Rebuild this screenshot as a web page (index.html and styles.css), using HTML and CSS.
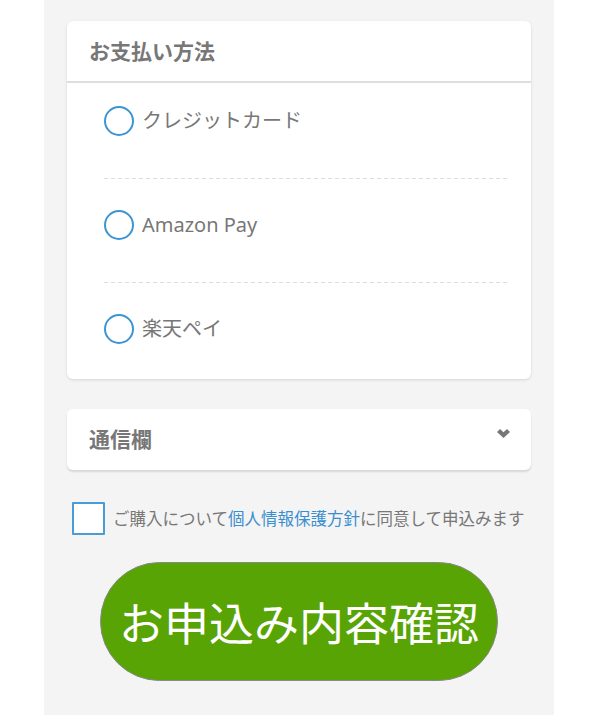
FILE: index.html
```html
<!DOCTYPE html>
<html lang="ja">
<head>
<meta charset="utf-8">
<link rel="stylesheet" href="styles.css">
</head>
<body>
<div class="page">
  <section class="card">
    <h2 class="card-head">お支払い方法</h2>
    <ul class="pay-list">
      <li class="pay-item"><span class="radio"></span><span class="pay-label">クレジットカード</span></li>
      <li class="pay-item"><span class="radio"></span><span class="pay-label">Amazon Pay</span></li>
      <li class="pay-item"><span class="radio"></span><span class="pay-label">楽天ペイ</span></li>
    </ul>
  </section>

  <section class="card card-collapse">
    <h2 class="collapse-title">通信欄</h2>
    <svg class="chev" width="13" height="9" viewBox="0 0 13 9"><path d="M0 3 L3 0 L6.5 3.2 L10 0 L13 3 L6.5 9 Z" fill="#777777"/></svg>
  </section>

  <div class="agree">
    <span class="checkbox"></span>
    <span class="agree-text">ご購入について<a class="link" href="#">個人情報保護方針</a>に同意して申込みます</span>
  </div>

  <div class="btn-wrap">
    <button class="confirm-btn" type="button">お申込み内容確認</button>
  </div>
</div>
</body>
</html>
```

FILE: styles.css
```css
html, body {
  margin: 0;
  padding: 0;
  background: #ffffff;
}

body {
  font-family: "Noto Sans", "Noto Sans CJK JP", sans-serif;
  color: #777777;
}

.page {
  width: 510px;
  min-height: 715px;
  margin-left: 44px;
  background: #f4f4f4;
  padding: 21px 23px 0;
  box-sizing: border-box;
}

.card {
  background: #ffffff;
  border-radius: 6px;
  box-shadow: 0 1px 3px rgba(0, 0, 0, 0.13);
}

.card-head {
  margin: 0;
  height: 58px;
  padding: 0 22px 2px;
  display: flex;
  align-items: center;
  font-size: 21px;
  font-weight: bold;
  color: #777777;
  border-bottom: 2px solid #dedede;
  box-sizing: content-box;
}

.pay-list {
  list-style: none;
  margin: 0;
  padding: 0 22px 0 37px;
}

.pay-item {
  display: flex;
  align-items: center;
  padding: 31px 0 43px;
  background-image: linear-gradient(to right, #dcdcdc 0, #dcdcdc 4px, transparent 4px, transparent 7px);
  background-size: 7px 1px;
  background-repeat: repeat-x;
  background-position: left bottom;
}

.pay-item:first-child {
  padding-top: 23px;
}

.pay-item:last-child {
  padding-bottom: 35px;
  background-image: none;
}

.radio {
  width: 26px;
  height: 26px;
  border: 2px solid #3b95d2;
  border-radius: 50%;
  flex: none;
  background: #fff;
}

.pay-label {
  margin-left: 8px;
  font-size: 20px;
  line-height: 30px;
  color: #777777;
}

.card-collapse {
  margin-top: 30px;
  height: 61px;
  padding: 0 22px 0 22px;
  display: flex;
  align-items: center;
  justify-content: space-between;
  box-shadow: 0 2px 2px rgba(0, 0, 0, 0.12);
}

.collapse-title {
  margin: 0 0 3px;
  font-size: 21px;
  font-weight: bold;
  color: #777777;
}

.chev {
  margin-top: -12px;
  margin-right: -1px;
}

.agree {
  display: flex;
  align-items: center;
  margin-top: 32px;
  padding-left: 5px;
}

.checkbox {
  width: 29px;
  height: 29px;
  border: 2px solid #4a9bd6;
  background: #ffffff;
  flex: none;
  border-radius: 1px;
}

.agree-text {
  margin-left: 8px;
  font-size: 16.5px;
  line-height: 24px;
  color: #777777;
  white-space: nowrap;
}

.link {
  color: #3b8fd0;
  text-decoration: none;
}

.btn-wrap {
  display: flex;
  justify-content: center;
  margin-top: 27px;
}

.confirm-btn {
  width: 398px;
  height: 119px;
  border-radius: 60px;
  border: 1px solid #888888;
  background: #59a405;
  color: #ffffff;
  font-family: "Noto Sans CJK JP", sans-serif;
  font-size: 45px;
  font-weight: normal;
  padding: 0;
  line-height: 1;
}
```
